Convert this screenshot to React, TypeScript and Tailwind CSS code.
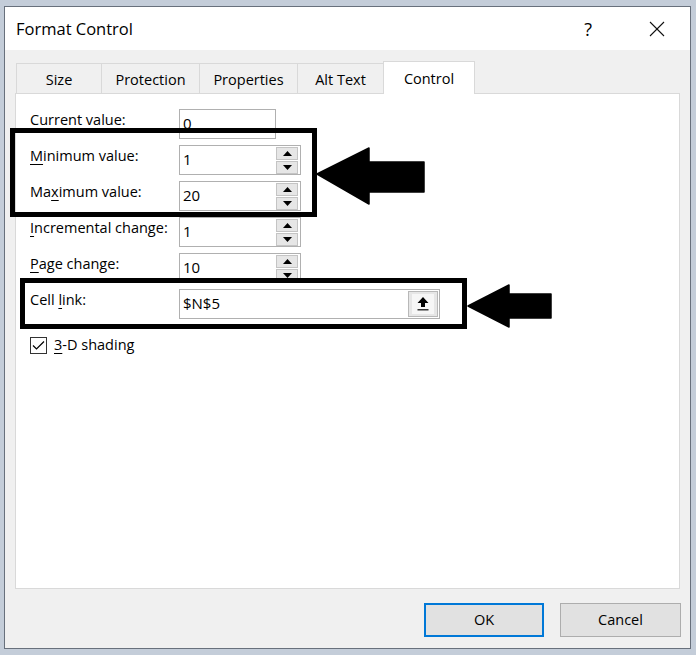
import React from "react";

const font = { fontFamily: '"Open Sans", "Noto Sans", Arial, sans-serif' };

function Spinner() {
  return (
    <div className="flex flex-col gap-[1px] w-[22px] h-[27px] mr-[2px] self-center">
      <div className="flex-1 bg-[#e6e6e6] border border-[#c4c4c4] flex items-center justify-center">
        <svg width="9" height="5" viewBox="0 0 9 5">
          <polygon points="0,5 4.5,0 9,5" fill="#000" />
        </svg>
      </div>
      <div className="flex-1 bg-[#e6e6e6] border border-[#c4c4c4] flex items-center justify-center">
        <svg width="9" height="5" viewBox="0 0 9 5">
          <polygon points="0,0 9,0 4.5,5" fill="#000" />
        </svg>
      </div>
    </div>
  );
}

function Row({
  label,
  value,
  width,
  spin,
}: {
  label: React.ReactNode;
  value: string;
  width: string;
  spin?: boolean;
}) {
  return (
    <div className="flex items-start h-[30px]">
      <div className="w-[149px] text-[14.5px] leading-[20px] pt-[1px] text-black">{label}</div>
      <div className={`${width} h-[30px] border border-[#b0b0b0] bg-white flex items-center`}>
        <div className="flex-1 pl-[3px] text-[15px] leading-[20px] pb-[2px] text-black">{value}</div>
        {spin ? <Spinner /> : null}
      </div>
    </div>
  );
}

function U({ children }: { children: React.ReactNode }) {
  return <span className="underline decoration-1 underline-offset-[3px]">{children}</span>;
}

export default function App() {
  return (
    <div
      className="relative w-[696px] h-[655px] bg-[#c4cdd9] pt-[6px] pl-[4px] overflow-hidden"
      style={font}
    >
      <div className="w-[687px] h-[643px] border border-[#68707c] bg-[#f0f0f0] flex flex-col">
        {/* title bar */}
        <div className="h-[43px] bg-white flex items-center pl-[11px]">
          <div className="text-[16.5px] text-black leading-[22px]">Format Control</div>
          <div className="ml-auto mr-[57px] text-[18px] leading-[22px] text-black">?</div>
          <div className="mr-[25px] w-[16px] h-[16px]">
            <svg width="16" height="16" viewBox="0 0 16 16">
              <line x1="1" y1="1" x2="15" y2="15" stroke="#111" strokeWidth="1.1" />
              <line x1="15" y1="1" x2="1" y2="15" stroke="#111" strokeWidth="1.1" />
            </svg>
          </div>
        </div>

        {/* body */}
        <div className="flex-1 flex flex-col">
          <div className="mx-[10px] pt-[11px]">
            {/* tabs */}
            <div className="flex items-end pl-[1px] h-[32px] text-[14.5px] text-black">
              <div className="w-[85px] h-[30px] border-t border-l border-[#d9d9d9] flex items-center justify-center pt-[2px]">
                Size
              </div>
              <div className="w-[98px] h-[30px] border-t border-l border-[#d9d9d9] flex items-center justify-center pt-[2px]">
                Protection
              </div>
              <div className="w-[98px] h-[30px] border-t border-l border-[#d9d9d9] flex items-center justify-center pt-[2px]">
                Properties
              </div>
              <div className="w-[86px] h-[30px] border-t border-l border-[#d9d9d9] flex items-center justify-center pt-[2px]">
                Alt Text
              </div>
              <div className="relative z-10 w-[92px] h-[33px] mb-[-1px] bg-white border-t border-l border-r border-[#d9d9d9] flex items-center justify-center pt-[1px]">
                Control
              </div>
            </div>

            {/* panel */}
            <div className="h-[496px] bg-white border border-[#d9d9d9] pt-[15px] pl-[14px] flex flex-col gap-[6px]">
              <Row label={<><U>C</U>urrent value:</>} value="0" width="w-[97px]" />
              <Row label={<><U>M</U>inimum value:</>} value="1" width="w-[122px]" spin />
              <Row label={<>Ma<U>x</U>imum value:</>} value="20" width="w-[122px]" spin />
              <Row label={<><U>I</U>ncremental change:</>} value="1" width="w-[122px]" spin />
              <Row label={<><U>P</U>age change:</>} value="10" width="w-[122px]" spin />
              <div className="flex items-start h-[30px]">
                <div className="w-[149px] text-[14.5px] leading-[20px] pt-[1px] text-black">
                  Cell <U>l</U>ink:
                </div>
                <div className="w-[261px] h-[30px] border border-[#b0b0b0] bg-white flex items-stretch">
                  <div className="flex-1 pl-[3px] text-[15px] leading-[20px] pt-[3px] text-black">$N$5</div>
                  <div className="w-[30px] bg-[#e6e6e6] border border-[#b8b8b8] m-[1px] flex items-center justify-center">
                    <div className="w-[22px] h-[20px] bg-[#f6f6f6] flex items-center justify-center">
                      <svg width="12" height="14" viewBox="0 0 12 14">
                        <polygon points="6,0 11.5,6 8,6 8,10 4,10 4,6 0.5,6" fill="#000" />
                        <rect x="0.5" y="12" width="11" height="1.5" fill="#333" />
                      </svg>
                    </div>
                  </div>
                </div>
              </div>
              <div className="flex items-center mt-[10px] h-[20px]">
                <div className="w-[17px] h-[17px] border border-[#333] bg-white flex items-center justify-center">
                  <svg width="13" height="11" viewBox="0 0 13 11">
                    <polyline points="1,5.5 4.5,9 12,1.5" fill="none" stroke="#000" strokeWidth="1.2" />
                  </svg>
                </div>
                <div className="ml-[7px] text-[14.5px] leading-[20px] text-black">
                  <U>3</U>-D shading
                </div>
              </div>
            </div>
          </div>

          {/* buttons */}
          <div className="flex justify-end gap-[16px] mt-[14px] pr-[9px]">
            <div className="w-[120px] h-[34px] bg-[#e1e1e1] border-2 border-[#0078d7] flex items-center justify-center text-[14.5px] text-black">
              OK
            </div>
            <div className="w-[121px] h-[34px] bg-[#e1e1e1] border border-[#adadad] flex items-center justify-center text-[14.5px] text-black">
              Cancel
            </div>
          </div>
        </div>
      </div>

      {/* annotations */}
      <svg
        className="absolute left-0 top-0 pointer-events-none"
        width="696"
        height="655"
        viewBox="0 0 696 655"
      >
        <rect x="12.5" y="130.5" width="302" height="84" fill="none" stroke="#000" strokeWidth="5" />
        <rect x="22.5" y="280.5" width="442" height="46" fill="none" stroke="#000" strokeWidth="5" />
        <polygon
          points="317,174 369,148 369,162 424,162 424,192 369,192 369,204"
          fill="#000"
          stroke="#000"
          strokeWidth="1.5"
          strokeLinejoin="round"
        />
        <polygon
          points="468,306 509,285 509,294 551,294 551,318 509,318 509,327"
          fill="#000"
          stroke="#000"
          strokeWidth="1.5"
          strokeLinejoin="round"
        />
      </svg>
    </div>
  );
}
